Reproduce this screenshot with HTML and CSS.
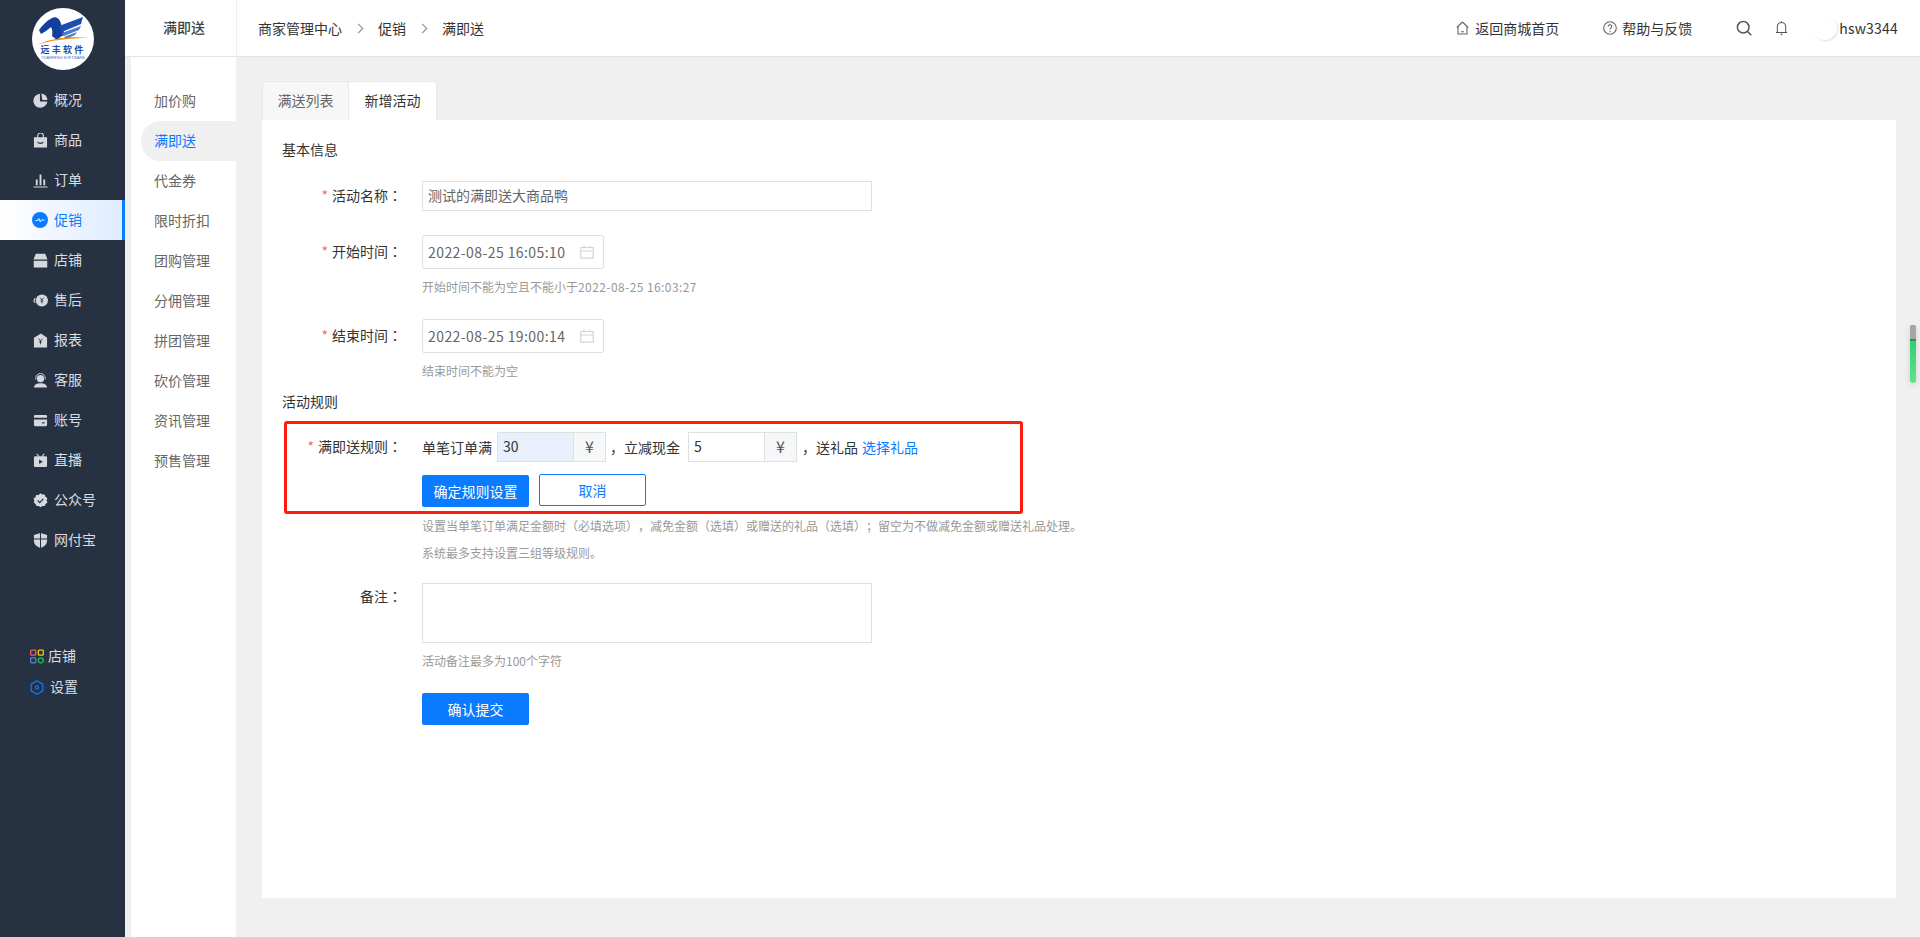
FILE: index.html
```html
<!DOCTYPE html>
<html lang="zh-CN">
<head>
<meta charset="utf-8">
<title>满即送</title>
<link rel="stylesheet" href="styles.css">
</head>
<body>
<div class="app">
  <aside class="rail">
    <div class="logo">
      <svg width="62" height="62" viewBox="0 0 62 62">
        <circle cx="31" cy="31" r="31" fill="#fff"/>
        <path d="M7 22C10 18 14 13 20 10c4-2 8 1 9 6l4 11c-5 1-6 4-8 5l-5-4c1-4 0-7-1-9l-5 4-5 3z" fill="#123f9c"/>
        <path d="M27 18L51 9l-2 7-19 8z" fill="#1b4fb0"/>
        <path d="M30 25l19-7-2 4-15 6zM32 29l13-5-2 3-9 4z" fill="#4f7cc9"/>
        <path d="M4 37c16-7 33-9 53-7-19 0-37 2-53 7z" fill="#f08a16"/>
        <text x="31" y="45" class="logo-cn" text-anchor="middle">远丰软件</text>
        <text x="31" y="50.500" class="logo-en" text-anchor="middle">YUANFENG SOFTWARE</text>
      </svg>
    </div>
    <nav class="rail-nav">
      <a class="rail-item">
        <svg class="ri" viewBox="0 0 16 16"><path d="M7.400 .8A7.500 7.500 0 1 0 15.300 9H7.400z" fill="currentColor"/><path d="M8.800 .6A7.500 7.500 0 0 1 15.400 7.500H10z" fill="currentColor"/></svg>概况</a>
      <a class="rail-item">
        <svg class="ri" viewBox="0 0 16 16"><path d="M1 4.500h14V15.500H1z" fill="currentColor"/><path d="M5 5V3a3 3 0 0 1 6 0v2" fill="none" stroke="currentColor" stroke-width="1.200"/><path d="M5 9.500c1 2 5 2 6 0" fill="none" stroke="#263241" stroke-width="1.200"/></svg>商品</a>
      <a class="rail-item">
        <svg class="ri" viewBox="0 0 16 16"><path d="M3 7h2v6H3zM7 1.500h2V13H7zM11 7h2v6h-2zM.500 14.300h15v1.200H.500z" fill="currentColor"/></svg>订单</a>
      <a class="rail-item rail-active">
        <svg class="ri-lg" viewBox="0 0 16 16"><circle cx="8" cy="8" r="8" fill="#0a7bff"/><path d="M3.500 8.500h2.300l1-2 1.500 3.500 1-2h3.200" fill="none" stroke="#fff" stroke-width=".9"/></svg>促销</a>
      <a class="rail-item">
        <svg class="ri" viewBox="0 0 16 16"><path d="M3 .8h10l2.500 6H.500z" fill="currentColor"/><path d="M.800 8.300h14.400V15.500H.800z" fill="currentColor"/></svg>店铺</a>
      <a class="rail-item">
        <svg class="ri" viewBox="0 0 16 16"><circle cx="9.500" cy="8" r="6.500" fill="currentColor"/><path d="M7.500 5l2 2.500 2-2.500M9.500 7.500V11M8 8.500h3" fill="none" stroke="#263241" stroke-width=".9"/><path d="M2.500 5.500c-2 2-2 3.500 0 5" fill="none" stroke="currentColor" stroke-width="1.300"/></svg>售后</a>
      <a class="rail-item">
        <svg class="ri" viewBox="0 0 16 16"><path d="M8.500 .5L15 5v10.500H1V5z" fill="currentColor"/><path d="M6 6l2 2.500L10 6M8 8.500V12M6.500 9.500h3" fill="none" stroke="#263241" stroke-width=".9"/></svg>报表</a>
      <a class="rail-item">
        <svg class="ri" viewBox="0 0 16 16"><circle cx="8" cy="6" r="3.800" fill="currentColor"/><path d="M3 7V5.500a5 5 0 0 1 10 0V7" fill="none" stroke="currentColor" stroke-width="1"/><path d="M1 15.500c.5-3.500 3-4.500 7-4.500s6.500 1 7 4.500z" fill="currentColor"/></svg>客服</a>
      <a class="rail-item">
        <svg class="ri" viewBox="0 0 16 16"><path d="M2.500 2h11A1.500 1.500 0 0 1 15 3.500V5H1V3.500A1.500 1.500 0 0 1 2.500 2zM1 7h14v5.500A1.500 1.500 0 0 1 13.500 14h-11A1.500 1.500 0 0 1 1 12.500z" fill="currentColor"/><path d="M9.500 10.500h3" stroke="#263241" stroke-width="1.200"/></svg>账号</a>
      <a class="rail-item">
        <svg class="ri" viewBox="0 0 16 16"><path d="M2.500 3.500h11A1.500 1.500 0 0 1 15 5v8.500a1.500 1.500 0 0 1-1.500 1.500h-11A1.500 1.500 0 0 1 1 13.500V5a1.500 1.500 0 0 1 1.500-1.500z" fill="currentColor"/><path d="M4 .8l2.500 3M12 .8L9.500 3.800" stroke="currentColor" stroke-width="1.200"/><path d="M6.500 6.800l4 2.400-4 2.400z" fill="#263241"/></svg>直播</a>
      <a class="rail-item">
        <svg class="ri" viewBox="0 0 16 16"><path d="M8 .3l2 1.400 2.500-.1.800 2.300 2 1.500L14.600 8l.8 2.100-2 1.500-.8 2.300-2.500-.1-2 1.400-2-1.400-2.500.1-.8-2.300-2-1.500L1.400 8 .6 5.900l2-1.500.8-2.300 2.500.1z" fill="currentColor"/><path d="M5 8l2.200 2.200L11 6.300" fill="none" stroke="#263241" stroke-width="1.300"/></svg>公众号</a>
      <a class="rail-item">
        <svg class="ri" viewBox="0 0 16 16"><path d="M8 0l7 2.200v6.300c0 3.500-3 6-7 7.500-4-1.500-7-4-7-7.500V2.200z" fill="currentColor"/><path d="M8 0v16M1 6.500h14" stroke="#263241" stroke-width="1.100"/></svg>网付宝</a>
    </nav>
    <div class="rail-foot">
      <a class="foot-item">
        <svg class="fi" viewBox="0 0 14 14" fill="none" stroke-width="1.300"><rect x=".7" y=".7" width="5" height="5" rx=".8" stroke="#e8606a"/><rect x="8.300" y=".7" width="5" height="5" rx=".8" stroke="#f5c518"/><rect x=".7" y="8.300" width="5" height="5" rx=".8" stroke="#5a80e8"/><circle cx="10.800" cy="10.800" r="2.500" stroke="#1fc24a"/></svg>店铺</a>
      <a class="foot-item foot-wide">
        <svg class="fi" viewBox="0 0 14 16" fill="none"><path d="M7 .8l6.200 3.600v7.200L7 15.200.8 11.600V4.400z" stroke="#0a7bff" stroke-width="1.300"/><circle cx="7" cy="8" r="1.700" stroke="#0a7bff" stroke-width="1.200"/></svg>设置</a>
    </div>
  </aside>

  <div class="main">
    <header class="topbar">
      <div class="page-title">满即送</div>
      <div class="crumbs">
        <span>商家管理中心</span><i class="sep"></i><span>促销</span><i class="sep"></i><span>满即送</span>
      </div>
      <div class="top-tools">
        <a class="tool tool-home">
          <svg class="ti" viewBox="0 0 13 14" fill="none" stroke="#666" stroke-width="1.100"><path d="M6.500 1L.8 6.500M6.500 1l5.700 5.500M2 5.500V13h9V5.500M5 10.800h3"/></svg>返回商城首页</a>
        <a class="tool tool-help">
          <svg class="ti-help" viewBox="0 0 14 14" fill="none" stroke="#666" stroke-width="1.100"><circle cx="7" cy="7" r="6.300"/><path d="M5.200 5.500a1.800 1.800 0 1 1 2.700 1.600c-.6.400-.9.700-.9 1.400M7 9.700v1.200"/></svg>帮助与反馈</a>
        <svg class="icon-search" viewBox="0 0 16 16" fill="none" stroke="#555" stroke-width="1.500"><circle cx="7.200" cy="7.200" r="5.800"/><path d="M11.500 11.500l3.800 3.800"/></svg>
        <svg class="icon-bell" viewBox="0 0 14 16" fill="none" stroke="#555" stroke-width="1.100"><path d="M1 12.800h12M2.500 12.800V6.500a4.500 4.500 0 0 1 9 0v6.300M7 .6V2"/><circle cx="7" cy="14.800" r=".9" fill="#555" stroke="none"/></svg>
        <span class="avatar"></span>
        <span class="user">hsw3344</span>
      </div>
    </header>

    <div class="body">
      <nav class="subnav">
        <a class="sub-item">加价购</a>
        <a class="sub-item sub-active">满即送</a>
        <a class="sub-item">代金券</a>
        <a class="sub-item">限时折扣</a>
        <a class="sub-item">团购管理</a>
        <a class="sub-item">分佣管理</a>
        <a class="sub-item">拼团管理</a>
        <a class="sub-item">砍价管理</a>
        <a class="sub-item">资讯管理</a>
        <a class="sub-item">预售管理</a>
      </nav>

      <main class="content">
        <div class="tabs">
          <div class="tab">满送列表</div>
          <div class="tab tab-on">新增活动</div>
        </div>
        <section class="card">
          <h3 class="sec sec-first">基本信息</h3>

          <div class="row row-name">
            <label class="lbl"><em>*</em>活动名称<span class="colon" lang="zh-TW">：</span></label>
            <div class="box box-wide">测试的满即送大商品鸭</div>
          </div>

          <div class="row row-start">
            <label class="lbl"><em>*</em>开始时间<span class="colon" lang="zh-TW">：</span></label>
            <div class="box box-date"><span class="num">2022-08-25 16:05:10</span>
              <svg class="cal" viewBox="0 0 14 14" fill="none" stroke="#d4d4d4" stroke-width="1.200"><path d="M.8 2.500h12.400v10.700H.8zM.8 6h12.400M4 .5v3M10 .5v3"/></svg>
            </div>
          </div>
          <p class="hint hint-date">开始时间不能为空且不能小于<span class="num">2022-08-25 16:03:27</span></p>

          <div class="row row-end">
            <label class="lbl"><em>*</em>结束时间<span class="colon" lang="zh-TW">：</span></label>
            <div class="box box-date"><span class="num">2022-08-25 19:00:14</span>
              <svg class="cal" viewBox="0 0 14 14" fill="none" stroke="#d4d4d4" stroke-width="1.200"><path d="M.8 2.500h12.400v10.700H.8zM.8 6h12.400M4 .5v3M10 .5v3"/></svg>
            </div>
          </div>
          <p class="hint hint-date">结束时间不能为空</p>

          <h3 class="sec sec-rule">活动规则</h3>

          <div class="row row-rule">
            <label class="lbl"><em>*</em>满即送规则<span class="colon" lang="zh-TW">：</span></label>
            <span class="t">单笔订单满</span>
            <div class="money money-a"><span class="val val-fill">30</span><span class="unit">¥</span></div>
            <span class="t comma">，</span><span class="t">立减现金</span>
            <div class="money money-b"><span class="val">5</span><span class="unit">¥</span></div>
            <span class="t comma comma-b">，</span><span class="t">送礼品</span>
            <a class="link">选择礼品</a>
          </div>

          <div class="actions">
            <button class="btn btn-primary">确定规则设置</button>
            <button class="btn btn-ghost">取消</button>
          </div>

          <div class="tips">
            <p class="hint">设置当单笔订单满足金额时（必填选项），减免金额（选填）或赠送的礼品（选填）；留空为不做减免金额或赠送礼品处理。</p>
            <p class="hint">系统最多支持设置三组等级规则。</p>
          </div>

          <div class="row row-note">
            <label class="lbl">备注<span class="colon" lang="zh-TW">：</span></label>
            <div class="box box-area"></div>
          </div>
          <p class="hint hint-date">活动备注最多为100个字符</p>

          <div class="submit">
            <button class="btn btn-primary btn-submit">确认提交</button>
          </div>

          <div class="mark"></div>
        </section>
      </main>
    </div>
  </div>
  <div class="float-bar"><span class="float-track"></span></div>
</div>
</body>
</html>
```

FILE: styles.css
```css
* { box-sizing: border-box; }
html, body { margin: 0; height: 100%; overflow: hidden; }
body {
  font-family: "Noto Sans CJK SC", "Open Sans", "Liberation Sans", sans-serif;
  font-size: 14px;
  color: #333;
  background: #f0f0f0;
  text-spacing-trim: space-all;
}
a { color: inherit; text-decoration: none; }
p, h3 { margin: 0; font-weight: 400; }
.colon { font-family: "Noto Sans CJK TC", sans-serif; }
.num { letter-spacing: .42px; }

.app { display: flex; height: 937px; position: relative; }

/* left rail */
.rail { width: 125px; flex: none; background: #263241; color: #d9dde1; display: flex; flex-direction: column; }
.logo { height: 80px; padding: 8px 0 0 32px; }
.logo svg { display: block; }
.logo-cn { font-size: 9px; font-weight: 700; fill: #1b4fb0; letter-spacing: 2.200px; font-family: "Noto Sans CJK SC", sans-serif; }
.logo-en { font-size: 3.800px; fill: #3f6fc4; font-family: "Liberation Sans", sans-serif; }
.rail-item { height: 40px; display: flex; align-items: center; padding: 0 0 2px 33px; gap: 6px; line-height: 20px; }
.ri { width: 15px; height: 15px; flex: none; color: #d5d8dc; margin-top: 2px; }
.ri-lg { width: 16px; height: 16px; flex: none; margin: 2px 0 0 -1px; }
.rail-active { background: linear-gradient(90deg, #fff 0%, #deecff 100%); border-right: 3px solid #0a7bff; color: #0a7bff; }
.rail-foot { margin-top: 84px; padding-left: 30px; display: flex; flex-direction: column; gap: 7px; }
.foot-item { height: 24px; display: flex; align-items: center; gap: 4px; padding-bottom: 2px; }
.foot-wide { gap: 6px; }
.fi { width: 14px; height: 15px; flex: none; margin-top: 2px; }

/* top bar */
.main { flex: 1; min-width: 0; display: flex; flex-direction: column; }
.topbar { height: 57px; flex: none; background: #fff; border-bottom: 1px solid #e4e4e4; display: flex; align-items: center; }
.page-title { width: 112px; height: 56px; flex: none; display: flex; align-items: center; justify-content: center; padding: 0 0 2px 7px; border-right: 1px solid #eee; font-weight: 500; color: #444; }
.crumbs { display: flex; align-items: center; padding-left: 21px; }
.sep { width: 7px; height: 7px; margin: 0 16px 0 13px; border-top: 1px solid #888; border-right: 1px solid #888; transform: rotate(45deg); }
.top-tools { margin-left: auto; display: flex; align-items: center; padding-right: 22px; }
.tool { display: flex; align-items: center; }
.ti { width: 13px; height: 14px; flex: none; margin-right: 6px; }
.ti-help { width: 14px; height: 14px; flex: none; margin-right: 5px; }
.tool-help { margin-left: 44px; }
.icon-search { width: 16px; height: 16px; margin-left: 44px; }
.icon-bell { width: 13px; height: 16px; margin-left: 23px; }
.avatar { width: 24px; height: 24px; margin-left: 25px; border-radius: 50%; background: #fff; box-shadow: 1px 1px 2px rgba(0,0,0,.12); }
.user { margin-left: 2px; letter-spacing: .2px; }

/* body */
.body { flex: 1; min-height: 0; display: flex; }
.subnav { width: 105px; margin-left: 6px; flex: none; background: #fff; padding-top: 24px; color: #666; }
.sub-item { display: block; height: 40px; line-height: 38px; padding-left: 23px; }
.sub-active { margin-left: 10px; padding-left: 13px; background: #f0f0f0; border-radius: 20px 0 0 20px; color: #0a7bff; }

.content { flex: 1; min-width: 0; padding: 24px 24px 39px 26px; display: flex; flex-direction: column; }
.tabs { display: flex; height: 39px; flex: none; }
.tab { width: 87px; height: 39px; line-height: 37px; text-align: center; background: #f7f7f7; color: #666; border: 1px solid #e8e8e8; border-bottom: 0; border-radius: 3px 0 0 0; }
.tab-on { width: 88px; background: #fff; color: #333; border-left: 0; border-radius: 0 3px 0 0; }

.card { flex: 1; background: #fff; padding: 20px 20px 0; position: relative; }
.sec { font-size: 14px; line-height: 18px; height: 20px; }
.sec-rule { margin-top: 11px; }

.row { display: flex; align-items: center; }
.row-name { margin-top: 21px; }
.row-start { margin-top: 24px; }
.row-end { margin-top: 22px; }
.row-rule { margin-top: 20px; }
.row-note { margin-top: 17px; align-items: flex-start; }
.lbl { width: 120px; flex: none; margin-right: 20px; text-align: right; line-height: 20px; padding-bottom: 2px; }
.lbl em { font-style: normal; color: #f56c6c; margin-right: 4px; }
.row-note .lbl { padding-top: 3px; }

.box { border: 1px solid #e0e0e0; display: flex; align-items: center; color: #666; }
.box-wide { width: 450px; height: 30px; padding: 0 0 2px 5px; }
.box-date { width: 182px; height: 34px; padding: 0 9px 0 5px; border-radius: 2px; justify-content: space-between; }
.box-area { width: 450px; height: 60px; }
.cal { width: 14px; height: 14px; flex: none; }

.hint { font-size: 12px; line-height: 16px; height: 18px; color: #999; padding-left: 140px; }
.hint-date { margin-top: 10px; }

.t { flex: none; }
.money { display: flex; width: 109px; height: 30px; border: 1px solid #e0e0e0; }
.money-a { margin-left: 5px; }
.money-b { margin-left: 8px; }
.val { flex: 1; padding-left: 5px; line-height: 26px; color: #333; }
.val-fill { background: #e8f0fe; }
.unit { width: 32px; flex: none; text-align: center; font-size: 16px; line-height: 26px; background: #f6f7f9; border-left: 1px solid #e0e0e0; color: #555; }
.comma { margin-left: 4px; }
.comma-b { margin-left: 5px; }
.link { margin-left: 4px; color: #0a7bff; }

.actions { display: flex; gap: 10px; margin: 13px 0 0 140px; align-items: flex-start; }
.btn { width: 107px; height: 32px; font: inherit; border-radius: 2px; padding: 0 0 1px; cursor: pointer; }
.btn-primary { background: #0a7bff; border: 0; color: #fff; }
.btn-ghost { background: #fff; border: 1px solid #0a7bff; color: #0a7bff; margin-top: -1px; }

.tips { margin-top: 5px; }
.tips .hint { line-height: 27px; height: 27px; }

.submit { margin: 22px 0 0 140px; }

/* red annotation frame over the rule block */
.mark { position: absolute; left: 22px; top: 301px; width: 739px; height: 93px; border: 3px solid #ff1a0e; border-radius: 3px; pointer-events: none; }

/* floating scrollbar widget */
.float-bar { position: absolute; left: 1910px; top: 325px; width: 6px; height: 58px; border-radius: 3px; overflow: hidden; background: linear-gradient(180deg, #23c566 0%, #5fe38f 100%); box-shadow: 0 2px 6px rgba(0,0,0,.12); }
.float-track { display: block; height: 16px; background: #a6a6a6; border-bottom: 2px solid #1c9a50; }
```
